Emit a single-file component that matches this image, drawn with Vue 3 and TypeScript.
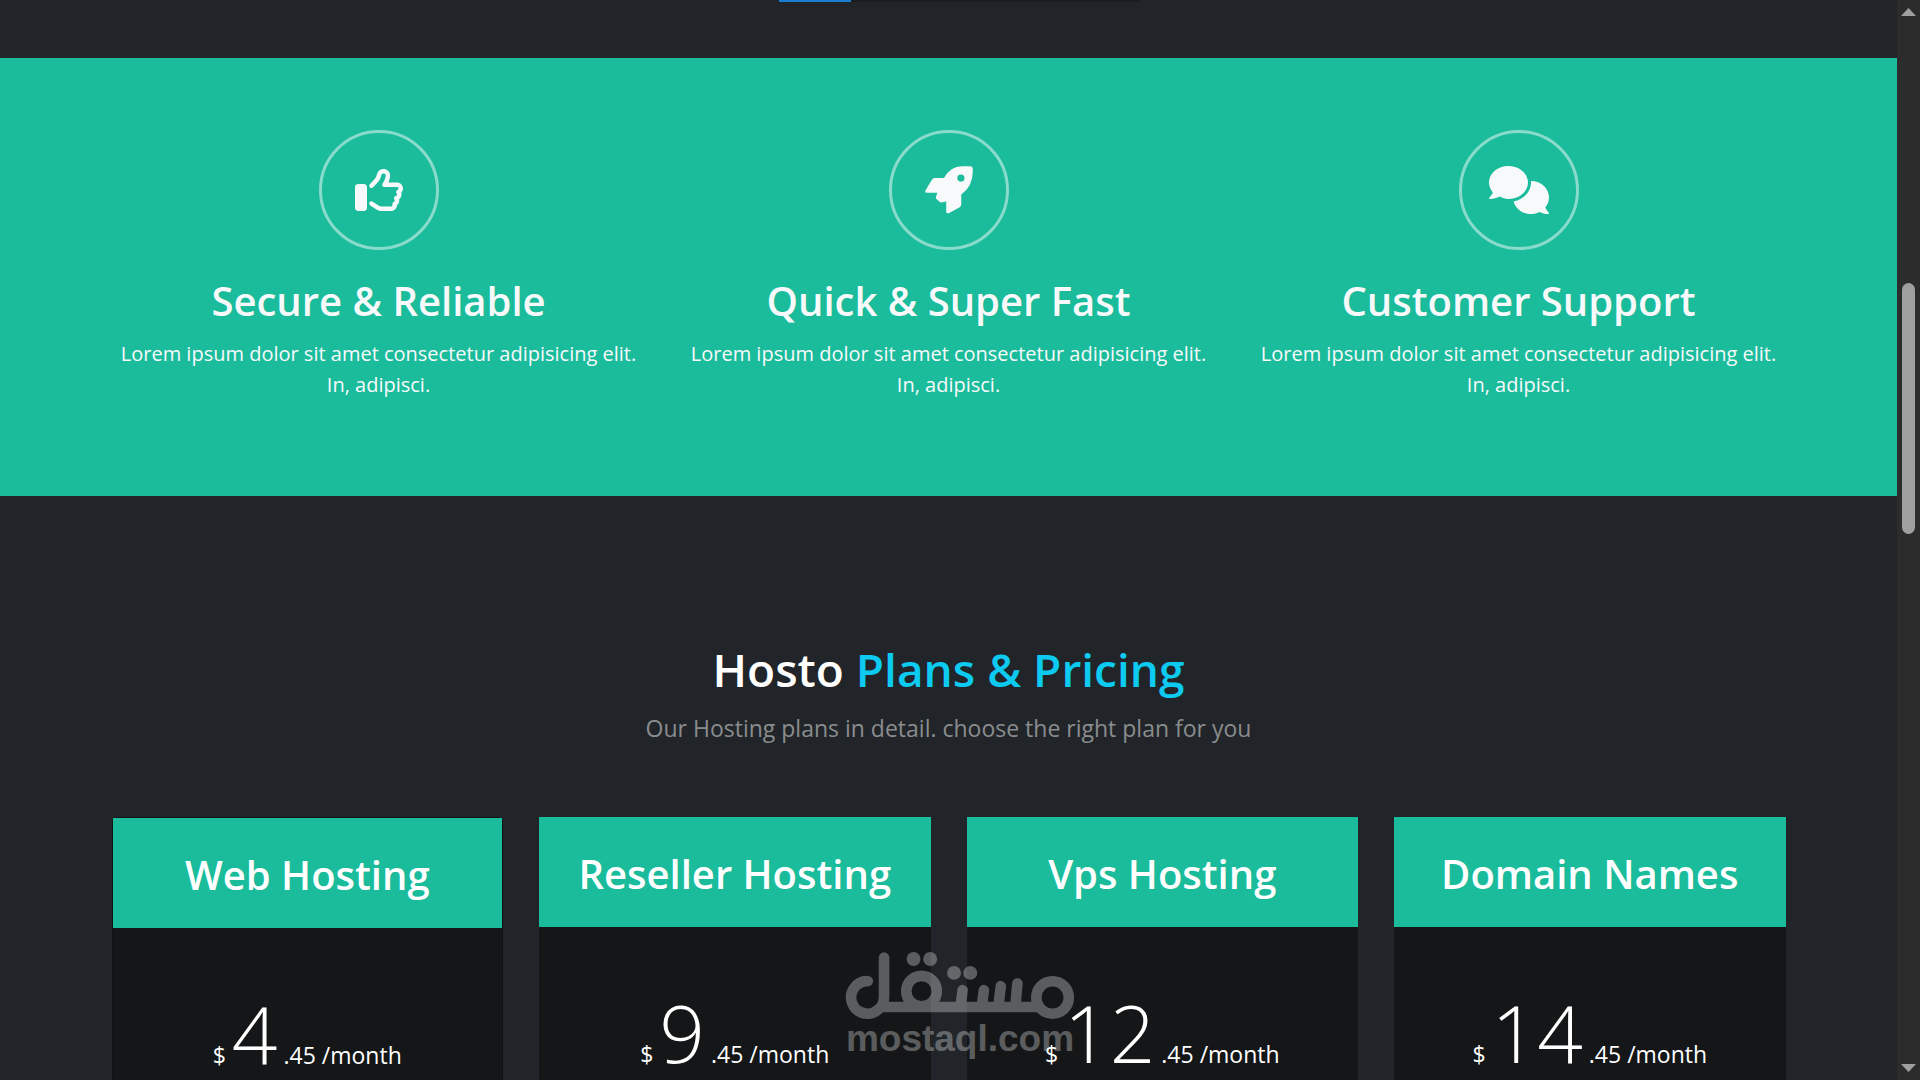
<script setup lang="ts">
interface Feature {
  title: string
  text: string
  icon: string
  viewBox: string
  width: number
}

interface Plan {
  name: string
  price: number
  active: boolean
}

const blurb = 'Lorem ipsum dolor sit amet consectetur adipisicing elit. In, adipisci.'

const features: Feature[] = [
  {
    title: 'Secure & Reliable',
    text: blurb,
    viewBox: '0 0 512 512',
    width: 48,
    icon: 'M323.8 34.8c-38.2-10.9-78.1 11.2-89 49.4l-5.7 20c-3.7 13-10.4 25-19.5 35l-51.3 56.4c-8.9 9.8-8.2 25 1.6 33.9s25 8.2 33.9-1.6l51.3-56.4c14.1-15.5 24.4-34 30.1-54.1l5.7-20c3.6-12.7 16.9-20.1 29.7-16.5s20.1 16.9 16.5 29.7l-5.7 20c-5.7 19.9-14.7 38.7-26.6 55.5c-5.2 7.3-5.8 16.9-1.7 24.9s12.3 13 21.3 13L448 224c8.8 0 16 7.2 16 16c0 6.8-4.3 12.7-10.4 15c-7.4 2.8-13 9-14.9 16.7s.1 15.8 5.3 21.7c2.5 2.8 4 6.5 4 10.6c0 7.8-5.6 14.3-13 15.7c-8.2 1.6-15.1 7.3-18 15.2s-1.6 16.7 3.6 23.3c2.1 2.7 3.4 6.1 3.4 9.9c0 6.7-4.2 12.6-10.2 14.9c-11.5 4.5-17.7 16.9-14.4 28.8c.4 1.3 .6 2.8 .6 4.3c0 8.8-7.2 16-16 16H286.5c-12.6 0-25-3.7-35.5-10.7l-61.7-41.1c-11-7.4-25.9-4.4-33.3 6.7s-4.4 25.9 6.7 33.3l61.7 41.1c18.4 12.3 40 18.8 62.1 18.8H384c34.7 0 62.9-27.6 64-62c14.6-11.7 24-29.7 24-50c0-4.5-.5-8.8-1.3-13c15.4-11.7 25.3-30.2 25.3-51c0-6.5-1-12.8-2.8-18.7C504.8 273.7 512 257.7 512 240c0-35.3-28.6-64-64-64l-92.3 0c4.7-10.4 8.7-21.2 11.8-32.2l5.7-20c10.9-38.2-11.2-78.1-49.4-89zM32 192c-17.7 0-32 14.3-32 32V448c0 17.7 14.3 32 32 32H96c17.7 0 32-14.3 32-32V224c0-17.7-14.3-32-32-32H32z',
  },
  {
    title: 'Quick & Super Fast',
    text: blurb,
    viewBox: '0 0 147 147',
    width: 48,
    icon: 'M1 76L21 42Q24 37 30 37L58 37Q78 1 113 1L139 1Q145 1 146 7Q150 59 111 87L111 118Q111 124 105 127L74 144Q66 147 65 140L65 109L51 112Q46 112 43 108L35 101Q32 97 34 93L38 82L6 82Q-1 82 1 76ZM121 37a11 11 0 1 0-22 0a11 11 0 1 0 22 0Z',
  },
  {
    title: 'Customer Support',
    text: blurb,
    viewBox: '0 0 640 512',
    width: 60,
    icon: 'M416 176C416 78.8 322.9 0 208 0S0 78.8 0 176c0 39.57 15.62 75.96 41.67 105.4c-16.39 32.76-39.23 57.32-39.59 57.68c-2.1 2.205-2.67 5.475-1.441 8.354C1.9 350.3 4.602 352 7.66 352c38.35 0 76.73-11.12 107.1-25.8C142.4 341.1 174.2 352 208 352C322.9 352 416 273.2 416 176zM599.6 443.7C624.8 413.9 640 376.6 640 336C640 238.8 554 160 448 160c-.3145 0-.6191 .041-.9336 .043C447.5 165.3 448 170.6 448 176c0 98.62-79.68 181.2-186.1 202.5C282.7 455.1 357.1 512 448 512c33.69 0 65.32-8.008 92.85-21.98C565.2 502 596.1 512 632.3 512c3.059 0 5.76-1.725 7.02-4.605c1.229-2.879 .6582-6.148-1.441-8.354C637.6 498.7 615.9 475.3 599.6 443.7z',
  },
]

const plans: Plan[] = [
  { name: 'Web Hosting', price: 4, active: true },
  { name: 'Reseller Hosting', price: 9, active: false },
  { name: 'Vps Hosting', price: 12, active: false },
  { name: 'Domain Names', price: 14, active: false },
]
</script>

<template>
  <div class="window">
    <main class="page">
      <section class="features">
        <div class="container features-grid">
          <article v-for="feature in features" :key="feature.title" class="feature">
            <span class="feature-icon">
              <svg :viewBox="feature.viewBox" :width="feature.width" height="48" aria-hidden="true">
                <path :d="feature.icon" fill="currentColor" fill-rule="evenodd" />
              </svg>
            </span>
            <h2 class="feature-title">{{ feature.title }}</h2>
            <p class="feature-text">{{ feature.text }}</p>
          </article>
        </div>
      </section>

      <section class="pricing">
        <div class="container">
          <header class="pricing-head">
            <h1 class="pricing-title">Hosto <span class="accent">Plans &amp; Pricing</span></h1>
            <p class="pricing-lead">Our Hosting plans in detail. choose the right plan for you</p>
          </header>
          <div class="plans">
            <article
              v-for="plan in plans"
              :key="plan.name"
              class="plan"
              :class="{ 'plan-active': plan.active }"
            >
              <h2 class="plan-name">{{ plan.name }}</h2>
              <p class="plan-price">
                $ <span class="amount">{{ plan.price }}</span> .45 /month
              </p>
            </article>
          </div>
        </div>
      </section>
    </main>

    <div class="scrollbar" aria-hidden="true">
      <svg class="arrow" viewBox="0 0 30 16" width="15" height="8"><path d="M15 0L30 16H0z" /></svg>
      <div class="track"><div class="thumb"></div></div>
      <svg class="arrow" viewBox="0 0 30 16" width="15" height="8"><path d="M0 0H30L15 16z" /></svg>
    </div>

    <div class="top-strip" aria-hidden="true"><span class="top-strip-fill"></span></div>

    <div class="watermark">
      <svg viewBox="45 66 690 202" width="230" height="67" role="img" aria-label="مستقل">
        <g fill="none" stroke="#fff" stroke-width="32" stroke-linecap="round">
          <path d="M112 154A49 49 0 1 0 144 239Q161 226 161 200V83" />
          <path d="M144 232H640" stroke-linecap="butt" />
          <circle cx="274" cy="184" r="46" />
          <path d="M398 181L392 228M462 181L456 228M513 169L506 228M563 161L557 228" />
          <circle cx="669" cy="203" r="49" />
        </g>
        <g fill="#fff">
          <circle cx="250" cy="87" r="21" />
          <circle cx="300" cy="87" r="21" />
          <circle cx="372" cy="129" r="21" />
          <circle cx="421" cy="129" r="21" />
        </g>
      </svg>
      <span class="watermark-text">mostaql.com</span>
    </div>
  </div>
</template>

<style>
body {
  background: #212529;
}
</style>

<style scoped>
.window {
  position: relative;
  display: flex;
  height: 100vh;
  overflow: hidden;
  background: #212529;
  color: #fff;
  font-family: "Segoe UI", "Open Sans", "Noto Sans", sans-serif;
}

.page {
  flex: 1;
  min-width: 0;
  padding-top: 58px;
}

.container {
  box-sizing: border-box;
  max-width: 1710px;
  margin: 0 auto;
  padding: 0 18px;
}

.features {
  box-sizing: border-box;
  padding: 72px 0 96px;
  background: #1abc9c;
  color: #f8f9fa;
}

.features-grid {
  display: grid;
  grid-template-columns: repeat(3, 1fr);
  gap: 36px;
}

.feature {
  display: flex;
  flex-direction: column;
  align-items: center;
  text-align: center;
}

.feature-icon {
  box-sizing: border-box;
  display: flex;
  align-items: center;
  justify-content: center;
  width: 120px;
  height: 120px;
  border: 3px solid rgba(248, 249, 250, 0.5);
  border-radius: 50%;
}

.feature-title {
  margin: 26px 0 12px;
  font-size: 40px;
  font-weight: 600;
  line-height: 50px;
}

.feature-text {
  margin: 0;
  font-size: 20px;
  line-height: 31px;
}

.pricing-head {
  padding: 142px 0 71px;
  text-align: center;
}

.pricing-title {
  margin: 0;
  font-size: 46px;
  font-weight: 600;
  line-height: 62px;
}

.accent {
  color: #0dcaf0;
}

.pricing-lead {
  margin: 10px 0 0;
  color: #8a8c8e;
  font-size: 23px;
  line-height: 36px;
}

.plans {
  display: grid;
  grid-template-columns: repeat(4, 1fr);
  gap: 36px;
}

.plan {
  height: 400px;
  background: #141617;
  text-align: center;
}

.plan-active {
  border: 1px solid #111214;
  border-radius: 5px;
  box-sizing: border-box;
}

.plan-name {
  margin: 0;
  padding: 32px 0 28px;
  background: #1abc9c;
  font-size: 40px;
  font-weight: 600;
  line-height: 50px;
}

.plan-price {
  margin: 0;
  padding-top: 45px;
  font-size: 23px;
  line-height: 120px;
  white-space: nowrap;
}

.amount {
  font-size: 80px;
  font-weight: 300;
}

.scrollbar {
  box-sizing: border-box;
  display: flex;
  flex: none;
  flex-direction: column;
  align-items: center;
  width: 23px;
  padding: 8px 0;
  background: #2c2c2c;
}

.arrow {
  display: block;
  fill: #9f9f9f;
}

.track {
  flex: 1;
  padding-top: 267px;
}

.thumb {
  width: 13px;
  height: 251px;
  border-radius: 7px;
  background: #9f9f9f;
}

.top-strip {
  position: absolute;
  top: 0;
  left: 50%;
  width: 362px;
  height: 2px;
  background: #1b1c1e;
  transform: translateX(-50%);
}

.top-strip-fill {
  display: block;
  width: 72px;
  height: 2px;
  background: #1a7fd4;
}

.watermark {
  position: absolute;
  bottom: 22px;
  left: 50%;
  display: flex;
  flex-direction: column;
  align-items: center;
  opacity: 0.3;
  transform: translateX(-50%);
}

.watermark-text {
  font-family: "Liberation Sans", Arial, sans-serif;
  font-size: 37px;
  font-weight: 700;
  line-height: 39px;
}
</style>
